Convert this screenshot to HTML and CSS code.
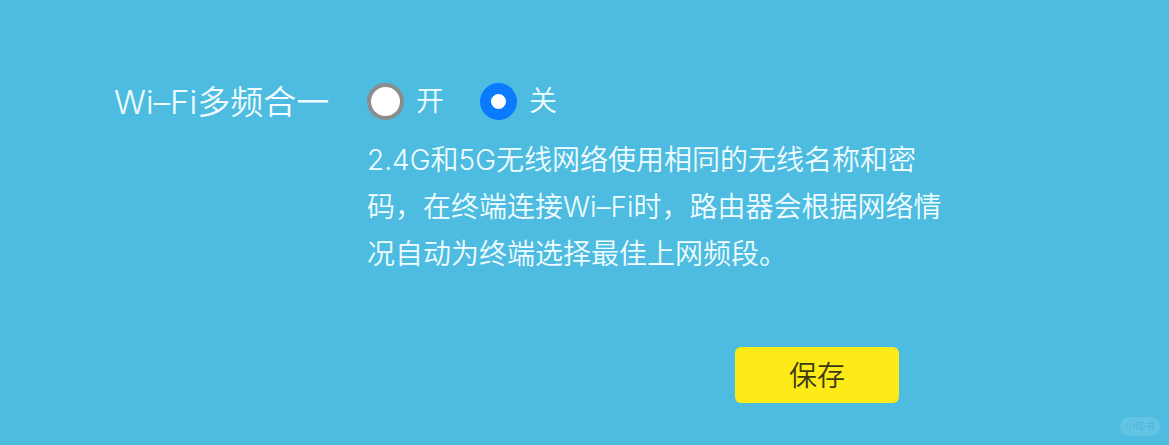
FILE: index.html
```html
<!DOCTYPE html>
<html lang="zh-Hans">
<head>
  <meta charset="UTF-8">
  <meta name="viewport" content="width=device-width, initial-scale=1.0">
  <title>Wi–Fi多频合一</title>
  <link rel="stylesheet" href="styles.css">
</head>

<body>
  <form class="wifi-form">
    <div class="setting" role="radiogroup" aria-labelledby="mergeLabel">
      <span class="setting-label" id="mergeLabel">Wi–Fi多频合一</span>
      <div class="setting-body">
        <div class="options">
          <label class="option" for="mergeOn">
            <input type="radio" name="merge" id="mergeOn" value="on">
            开
          </label>
          <label class="option" for="mergeOff">
            <input type="radio" name="merge" id="mergeOff" value="off" checked>
            关
          </label>
        </div>
        <p class="hint">2.4G和5G无线网络使用相同的无线名称和密码，在终端连接Wi–Fi时，路由器会根据网络情况自动为终端选择最佳上网频段。</p>
      </div>
    </div>
    <div class="actions">
      <button type="submit" class="save">保存</button>
    </div>
  </form>

  <span class="watermark">小红书</span>
</body>
</html>
```
FILE: styles.css
```css
* {
  box-sizing: border-box;
}

body {
  margin: 0;
  min-height: 100vh;
  background-color: #4dbce0;
  color: #f0fcff;
  font-family: "Inter", "Noto Sans CJK SC", sans-serif;
  font-size: 28px;
  font-weight: 350;
}

.wifi-form {
  max-width: 952px;
  padding: 77px 0 42px 114px;
}

.setting {
  display: flex;
}

.setting-label {
  flex: 0 0 253px;
  font-size: 33px;
  line-height: 50px;
}

.setting-body {
  flex: 1;
}

.options {
  display: flex;
  gap: 36px;
}

.option {
  display: flex;
  align-items: center;
  gap: 12px;
  line-height: 48px;
  cursor: pointer;
}

.option input {
  appearance: none;
  width: 37px;
  height: 37px;
  margin: 0;
  border: 4px solid #8c8c8f;
  border-radius: 50%;
  background-color: #fff;
  cursor: pointer;
}

.option input:checked {
  border: 11px solid #0a7aff;
}

.hint {
  margin: 12px 0 0;
  line-height: 47px;
}

.actions {
  display: flex;
  justify-content: flex-end;
  margin-top: 69px;
  padding-right: 53px;
}

.save {
  width: 164px;
  height: 56px;
  padding: 0 0 2px;
  border: none;
  border-radius: 6px;
  background-color: #fdea19;
  color: #3c3a10;
  font: inherit;
  cursor: pointer;
}

/* sits in the corner over the page */
.watermark {
  position: fixed;
  right: 9px;
  bottom: 9px;
  padding: 0 5px;
  border-radius: 10px;
  background-color: #63c4e4;
  color: #4eb4d6;
  font-size: 10px;
  line-height: 19px;
}
```
